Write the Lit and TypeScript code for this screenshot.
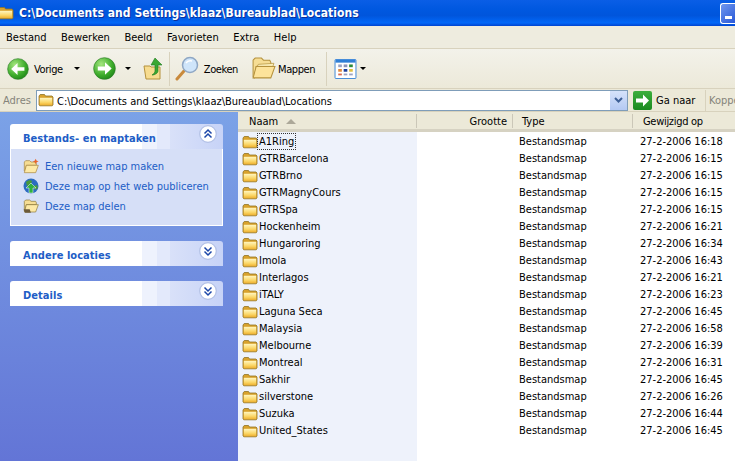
import { LitElement, html, css, svg } from "lit";
import { customElement } from "lit/decorators.js";

const folderIcon = svg`<svg class="fi" width="16" height="16" viewBox="0 0 16 16"><path d="M1 4 2.200 2.500h4.300l1 1.500H14l1 1V13l-.8.800H1.800L1 13z" fill="#d9a22c" stroke="#8f7326" stroke-width=".8"/><path d="M1.800 5.800h12.400v7.400H1.800z" fill="url(#fg)"/><defs><linearGradient id="fg" x1="0" y1="0" x2="0" y2="1"><stop offset="0" stop-color="#fff6c0"/><stop offset=".6" stop-color="#fbd768"/><stop offset="1" stop-color="#eeb030"/></linearGradient></defs></svg>`;

const openFolder = (w: number) => svg`<svg width="${w}" height="${w}" viewBox="0 0 24 24"><path d="M2 4 4 2h6l2 2h6l1 2v2l-14 2-2 11-1-1z" fill="#f6dd94" stroke="#b5923d"/><path d="M7 8 22 7l-1 3H6z" fill="#fbeeb8" stroke="#b5923d" stroke-width=".7"/><path d="M5 10h18l-4 11H2z" fill="#fde39a" stroke="#b5923d"/></svg>`;

const arrow = (size: number, flip: boolean) => svg`<svg width="${size}" height="${size}" viewBox="0 0 24 24"><defs><radialGradient id="g${flip ? 1 : 0}" cx=".35" cy=".3" r=".85"><stop offset="0" stop-color="#a4e67f"/><stop offset=".6" stop-color="#3cab2a"/><stop offset="1" stop-color="#177a14"/></radialGradient></defs><circle cx="12" cy="12" r="11.300" fill="url(#g${flip ? 1 : 0})" stroke="#2b7d25" stroke-width=".7"/><path transform="${flip ? "" : "rotate(180 12 12)"}" d="M5 10h7.500V5.500L19.500 12l-7 6.500V14H5z" fill="#fff"/></svg>`;

const chev = (up: boolean) => svg`<svg width="18" height="18" viewBox="0 0 18 18"><circle cx="9" cy="9" r="8" fill="#fff"/><circle cx="9" cy="9" r="8.300" fill="none" stroke="#b4c2e6" stroke-width="1.200"/><path transform="${up ? "" : "rotate(180 9 9)"}" d="M5.500 8.500 9 5l3.500 3.500M5.500 12.500 9 9l3.500 3.500" fill="none" stroke="#1c46a8" stroke-width="1.500"/></svg>`;

const FILES = ["A1Ring|16:18","GTRBarcelona|16:15","GTRBrno|16:15","GTRMagnyCours|16:15","GTRSpa|16:15","Hockenheim|16:21","Hungaroring|16:34","Imola|16:43","Interlagos|16:21","iTALY|16:23","Laguna Seca|16:45","Malaysia|16:58","Melbourne|16:39","Montreal|16:31","Sakhir|16:45","silverstone|16:26","Suzuka|16:44","United_States|16:45"];

@customElement("app-root")
export class AppRoot extends LitElement {
  static styles = css`
    :host { display: block; width: 735px; height: 461px; overflow: hidden; font: 11px "DejaVu Sans Condensed", "Noto Sans", sans-serif; color: #000; background: #fff; }
    .win { display: flex; flex-direction: column; height: 461px; }
    .title { height: 26px; box-sizing: border-box; flex: none; display: flex; align-items: center; background: linear-gradient(#0a5ee6 0%, #0058e0 35%, #0055dc 60%, #0268f8 88%, #0043cf 100%); color: #fff; font: 700 12px "DejaVu Sans Condensed", sans-serif; letter-spacing: .04px; overflow: hidden; }
    .title .tf { margin-left: -2px; margin-right: 5px; display: flex; }
    .title span { text-shadow: 1px 1px 0 #0a2f9a; flex: 1; white-space: nowrap; }
    .min { width: 15px; height: 21px; margin-top: 1px; box-sizing: border-box; border: 1px solid #fff; border-right: none; border-radius: 3px 0 0 3px; background: linear-gradient(135deg, #6f97ee, #2a59d8); display: flex; align-items: flex-end; padding: 0 0 4px 4px; }
    .min i { display: block; width: 7px; height: 3px; background: #fff; }
    .menu { height: 23px; box-sizing: border-box; flex: none; display: flex; align-items: center; gap: 14.500px; padding: 1px 0 0 6px; background: #eeecdf; border-bottom: 1px solid #d8d2bd; }
    .tools { height: 39px; flex: none; display: flex; align-items: center; background: linear-gradient(#f3f2ea, #ece9d9); border-bottom: 1px solid #d8d2bd; padding-left: 7px; }
    .tools svg { flex: none; display: block; }
    .tools .lab { flex: none; letter-spacing: -.4px; padding-top: 2px; }
    .drop { width: 0; height: 0; border: 3px solid transparent; border-top: 3px solid #000; border-bottom: none; flex: none; }
    .sep { width: 1px; height: 34px; background: #d8d2bd; flex: none; }
    .addr { height: 23px; box-sizing: border-box; flex: none; display: flex; align-items: center; background: #ece9d8; padding-left: 3px; border-bottom: 1px solid #d8d2bd; white-space: nowrap; }
    .gray { color: #85847a; }
    .adres { width: 27px; flex: none; }
    .input { margin-left: 6px; width: 592px; height: 21px; flex: none; box-sizing: border-box; border: 1px solid #7f9db9; background: #fff; display: flex; align-items: center; padding-left: 1px; }
    .input .path { margin-left: 3px; flex: 1; padding-top: 2px; }
    .combo { width: 17px; height: 19px; background: linear-gradient(#d5e2fa, #b4c9f3); display: flex; align-items: center; justify-content: center; }
    .go { width: 19px; height: 19px; margin-left: 5px; border-radius: 2px; background: linear-gradient(#3cae3c, #1a8a20); flex: none; }
    .ganaar { margin-left: 4px; width: 45px; flex: none; padding-top: 1px; }
    .main { flex: 1; display: flex; min-height: 0; }
    .side { width: 238px; flex: none; box-sizing: border-box; background: linear-gradient(#7ba2e7, #6375d6); padding: 12px 15px 0 10px; display: flex; flex-direction: column; }
    .phead { height: 25px; box-sizing: border-box; display: flex; align-items: center; justify-content: space-between; padding: 0 6px 0 13px; border-radius: 3px 3px 0 0; background: linear-gradient(90deg, #fff 0, #fff 62%, #eef2fd 62%, #eef2fd 69%, #e3e9fb 69%, #e3e9fb 75%, #d9e1f9 75%, #c7d3f7 100%); color: #215dc6; font: 700 11px "DejaVu Sans Condensed", sans-serif; letter-spacing: .05px; flex: none; }
    .phead span { padding-top: 3px; }
    .phead svg { margin-bottom: 5px; }
    .pbody { height: 77px; box-sizing: border-box; background: #d6dff7; border: 1px solid #fff; border-top: none; padding: 8px 0 0 12px; display: flex; flex-direction: column; gap: 3px; color: #215dc6; margin-bottom: 15px; }
    .task { display: flex; align-items: center; gap: 6px; height: 17px; }
    .task span { padding-top: 2px; }
    .closed { margin-bottom: 15px; }
    .list { flex: 1; display: flex; flex-direction: column; min-width: 0; }
    .lhead { height: 20px; flex: none; box-sizing: border-box; display: flex; background: #ece9d8; border-bottom: 3px solid #d6d2c2; align-items: center; }
    .hc { box-sizing: border-box; height: 14px; display: flex; align-items: center; border-right: 1px solid #cbc7b8; flex: none; padding-top: 2px; }
    .hc.n { width: 179px; padding-left: 11px; gap: 8px; }
    .hc.g { width: 96px; justify-content: flex-end; padding-right: 5px; }
    .hc.t { width: 120px; padding-left: 9px; }
    .hc.d { border: none; padding-left: 10px; letter-spacing: -.3px; }
    .tri { width: 0; height: 0; border: 5px solid transparent; border-bottom: 5px solid #aca899; border-top: none; }
    .rows { flex: 1; background: linear-gradient(90deg, #eef2fb 179px, #fff 179px); padding: 1px 0 0 4px; }
    .row { height: 17px; display: flex; align-items: center; }
    .row .fi { flex: none; }
    .nm { width: 261px; flex: none; }
    .nm span { padding: 0 1px; }
    .nm.focus span { outline: 1px dotted #333; padding: 1px 1px; }
    .ty { width: 121px; flex: none; }
  `;

  render() {
    return html`<div class="win">
      <div class="title"><div class="tf">${folderIcon}</div><span>C:\\Documents and Settings\\klaaz\\Bureaublad\\Locations</span><div class="min"><i></i></div></div>
      <div class="menu"><span>Bestand</span><span>Bewerken</span><span>Beeld</span><span>Favorieten</span><span>Extra</span><span>Help</span></div>
      <div class="tools">
        ${arrow(22, false)}
        <span class="lab" style="margin-left:5px">Vorige</span>
        <i class="drop" style="margin-left:11px"></i>
        <span style="width:13px"></span>
        ${arrow(23, true)}
        <i class="drop" style="margin-left:9px"></i>
        <span style="width:12px"></span>
        <svg width="21" height="24" viewBox="0 0 21 24"><path d="M1 9h6l1 1h9v12H3z" fill="#f7dc8f" stroke="#b5923d"/><path d="M12 1 19 8h-4v6c0 2-3 4-6 4 2-1 3-3 3-4V8H8z" fill="#3aa733" stroke="#1f7a1f" stroke-width=".6"/></svg>
        <span class="sep" style="margin-left:5px"></span>
        <svg style="margin-left:5px" width="25" height="25" viewBox="0 0 25 25"><path d="M9 15 2 23" stroke="#c98a3c" stroke-width="3" stroke-linecap="round"/><circle cx="15" cy="9" r="7.500" fill="#cfe5fa" stroke="#8fa7c4" stroke-width="1.500"/><path d="M11 7a5 4 0 0 1 6-2" stroke="#fff" stroke-width="1.500" fill="none"/></svg>
        <span class="lab" style="margin-left:4px">Zoeken</span>
        <span style="width:13px"></span>
        ${openFolder(25)}
        <span class="lab" style="margin-left:2px">Mappen</span>
        <span class="sep" style="margin-left:11px"></span>
        <svg style="margin-left:7px" width="23" height="20" viewBox="0 0 24 22"><rect x=".5" y=".5" width="23" height="21" rx="1" fill="#fff" stroke="#2f7fd6"/><rect x="1" y="1" width="22" height="3" fill="#2f7fd6"/><path d="M4 6h4v3H4z" fill="#9aa3c4"/><path d="M10 6h4v3h-4z" fill="#8b93b8"/><path d="M16 6h4v3h-4z" fill="#2a8a3a"/><path d="M4 11h4v3H4z" fill="#e08a3c"/><path d="M10 11h4v3h-4z" fill="#1c3f9e"/><path d="M16 11h4v3h-4z" fill="#e0c040"/><path d="M4 16h4v2H4z" fill="#d96a50"/><path d="M10 16h4v2h-4z" fill="#9aa3c4"/><path d="M16 16h4v2h-4z" fill="#9aa3c4"/></svg>
        <i class="drop" style="margin-left:3px"></i>
      </div>
      <div class="addr">
        <span class="gray adres">Adres</span>
        <div class="input">${folderIcon}<span class="path">C:\\Documents and Settings\\klaaz\\Bureaublad\\Locations</span>
          <div class="combo"><svg width="9" height="7" viewBox="0 0 9 7"><path d="M1 1l3.500 3.500L8 1" fill="none" stroke="#3d5f96" stroke-width="2"/></svg></div>
        </div>
        <svg class="go" viewBox="0 0 19 19"><path d="M3 7.500h7V3.500l6 6-6 6v-4H3z" fill="#fff"/></svg>
        <span class="ganaar">Ga naar</span>
        <span class="sep" style="height:21px;margin-left:4px"></span>
        <span class="gray" style="margin-left:3px">Koppelingen</span>
      </div>
      <div class="main">
        <div class="side">
          <div class="phead"><span>Bestands- en maptaken</span>${chev(true)}</div>
          <div class="pbody">
            <div class="task"><svg width="16" height="16" viewBox="0 0 24 24"><path d="M2 6 4 4h6l2 2h7l1 2v3H5L3 20 2 19z" fill="#f6dd94" stroke="#a5823a"/><path d="M5 11h18l-4 11H2z" fill="#fde9a6" stroke="#a5823a"/><path d="M19 1l1.500 3 3 1-3 1.500L19 9l-1.500-2.500-3-1.500 3-1z" fill="#e8662c"/></svg><span>Een nieuwe map maken</span></div>
            <div class="task"><svg width="16" height="16" viewBox="0 0 16 16"><circle cx="8" cy="8" r="7.500" fill="#2c6cc0"/><path d="M3 4c2-2 5-2 6-1l-1 3-4 2zM11 8l3-1 1 3-3 2z" fill="#4a9a3a"/><path d="M8 5l5 5h-3v5H6v-5H3z" fill="#30b040" stroke="#fff" stroke-width=".5"/></svg><span>Deze map op het web publiceren</span></div>
            <div class="task"><svg width="16" height="16" viewBox="0 0 24 24"><path d="M2 5 4 3h6l2 2h7l1 2v3H5L3 20 2 19z" fill="#f6dd94" stroke="#8a7433"/><path d="M5 10h18l-4 11H2z" fill="#fde9a6" stroke="#8a7433"/><path d="M1 17h9l2 5H3z" fill="#6b5a3a"/></svg><span>Deze map delen</span></div>
          </div>
          <div class="phead closed"><span>Andere locaties</span>${chev(false)}</div>
          <div class="phead closed"><span>Details</span>${chev(false)}</div>
        </div>
        <div class="list">
          <div class="lhead">
            <div class="hc n"><span>Naam</span><i class="tri"></i></div>
            <div class="hc g">Grootte</div>
            <div class="hc t">Type</div>
            <div class="hc d">Gewijzigd op</div>
          </div>
          <div class="rows">
            ${FILES.map((f, i) => {
              const [n, t] = f.split("|");
              return html`<div class="row">${folderIcon}<div class="nm ${i === 0 ? "focus" : ""}"><span>${n}</span></div><div class="ty">Bestandsmap</div><div>27-2-2006 ${t}</div></div>`;
            })}
          </div>
        </div>
      </div>
    </div>`;
  }
}
